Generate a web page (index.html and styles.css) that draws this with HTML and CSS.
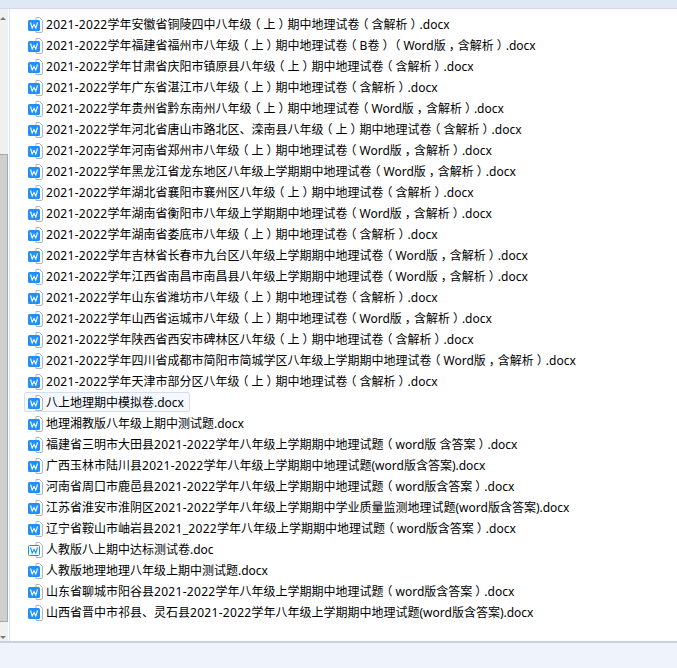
FILE: index.html
```html
<!DOCTYPE html>
<html lang="zh">
<head>
<meta charset="utf-8">
<title>文件列表</title>
<link rel="stylesheet" href="styles.css">
</head>
<body>
<svg class="defs" width="0" height="0" aria-hidden="true">
  <symbol id="docx" viewBox="0 0 15 16">
    <path d="M8 .5h3.500L14.500 3.500V14a1.500 1.500 0 0 1-1.500 1.500H8z" fill="#fff" stroke="#aeb4c0"/>
    <rect x="0" y="3" width="12" height="11" rx="1.500" fill="#1e8ffb"/>
    <path d="M2.500 5.500L4.200 11L6 7.500L7.800 11L9.500 5.500" fill="none" stroke="#fff" stroke-width="1.100"/>
  </symbol>
  <symbol id="doc" viewBox="0 0 15 16">
    <path d="M8 .5h3.500L14.500 3.500V14a1.500 1.500 0 0 1-1.500 1.500H8z" fill="#fff" stroke="#aeb4c0"/>
    <rect x=".5" y="3.500" width="11" height="10" rx="1" fill="#f7fbff" stroke="#1e8ffb"/>
    <path d="M2.500 5.500L4.200 11L6 7.500L7.800 11L9.500 5.500" fill="none" stroke="#1e8ffb" stroke-width="1.100"/>
  </symbol>
</svg>
<div class="topband"></div>
<div class="window">
  <div class="scrollbar">
    <div class="arrow arrow-up"></div>
    <div class="track"><div class="thumb"></div></div>
    <div class="arrow arrow-down"></div>
  </div>
  <ul class="files">
    <li class="file"><svg class="icon"><use href="#docx"/></svg><span><span class="y">2021-2022</span>学年安徽省铜陵四中八年级<span class="p">（</span>上<span class="p">）</span>期中地理试卷<span class="p">（</span>含解析<span class="p">）</span>.docx</span></li>
    <li class="file"><svg class="icon"><use href="#docx"/></svg><span><span class="y">2021-2022</span>学年福建省福州市八年级<span class="p">（</span>上<span class="p">）</span>期中地理试卷<span class="p">（</span>B卷<span class="p">）</span><span class="p">（</span>Word版<span class="p">，</span>含解析<span class="p">）</span>.docx</span></li>
    <li class="file"><svg class="icon"><use href="#docx"/></svg><span><span class="y">2021-2022</span>学年甘肃省庆阳市镇原县八年级<span class="p">（</span>上<span class="p">）</span>期中地理试卷<span class="p">（</span>含解析<span class="p">）</span>.docx</span></li>
    <li class="file"><svg class="icon"><use href="#docx"/></svg><span><span class="y">2021-2022</span>学年广东省湛江市八年级<span class="p">（</span>上<span class="p">）</span>期中地理试卷<span class="p">（</span>含解析<span class="p">）</span>.docx</span></li>
    <li class="file"><svg class="icon"><use href="#docx"/></svg><span><span class="y">2021-2022</span>学年贵州省黔东南州八年级<span class="p">（</span>上<span class="p">）</span>期中地理试卷<span class="p">（</span>Word版<span class="p">，</span>含解析<span class="p">）</span>.docx</span></li>
    <li class="file"><svg class="icon"><use href="#docx"/></svg><span><span class="y">2021-2022</span>学年河北省唐山市路北区、滦南县八年级<span class="p">（</span>上<span class="p">）</span>期中地理试卷<span class="p">（</span>含解析<span class="p">）</span>.docx</span></li>
    <li class="file"><svg class="icon"><use href="#docx"/></svg><span><span class="y">2021-2022</span>学年河南省郑州市八年级<span class="p">（</span>上<span class="p">）</span>期中地理试卷<span class="p">（</span>Word版<span class="p">，</span>含解析<span class="p">）</span>.docx</span></li>
    <li class="file"><svg class="icon"><use href="#docx"/></svg><span><span class="y">2021-2022</span>学年黑龙江省龙东地区八年级上学期期中地理试卷<span class="p">（</span>Word版<span class="p">，</span>含解析<span class="p">）</span>.docx</span></li>
    <li class="file"><svg class="icon"><use href="#docx"/></svg><span><span class="y">2021-2022</span>学年湖北省襄阳市襄州区八年级<span class="p">（</span>上<span class="p">）</span>期中地理试卷<span class="p">（</span>含解析<span class="p">）</span>.docx</span></li>
    <li class="file"><svg class="icon"><use href="#docx"/></svg><span><span class="y">2021-2022</span>学年湖南省衡阳市八年级上学期期中地理试卷<span class="p">（</span>Word版<span class="p">，</span>含解析<span class="p">）</span>.docx</span></li>
    <li class="file"><svg class="icon"><use href="#docx"/></svg><span><span class="y">2021-2022</span>学年湖南省娄底市八年级<span class="p">（</span>上<span class="p">）</span>期中地理试卷<span class="p">（</span>含解析<span class="p">）</span>.docx</span></li>
    <li class="file"><svg class="icon"><use href="#docx"/></svg><span><span class="y">2021-2022</span>学年吉林省长春市九台区八年级上学期期中地理试卷<span class="p">（</span>Word版<span class="p">，</span>含解析<span class="p">）</span>.docx</span></li>
    <li class="file"><svg class="icon"><use href="#docx"/></svg><span><span class="y">2021-2022</span>学年江西省南昌市南昌县八年级上学期期中地理试卷<span class="p">（</span>Word版<span class="p">，</span>含解析<span class="p">）</span>.docx</span></li>
    <li class="file"><svg class="icon"><use href="#docx"/></svg><span><span class="y">2021-2022</span>学年山东省潍坊市八年级<span class="p">（</span>上<span class="p">）</span>期中地理试卷<span class="p">（</span>含解析<span class="p">）</span>.docx</span></li>
    <li class="file"><svg class="icon"><use href="#docx"/></svg><span><span class="y">2021-2022</span>学年山西省运城市八年级<span class="p">（</span>上<span class="p">）</span>期中地理试卷<span class="p">（</span>Word版<span class="p">，</span>含解析<span class="p">）</span>.docx</span></li>
    <li class="file"><svg class="icon"><use href="#docx"/></svg><span><span class="y">2021-2022</span>学年陕西省西安市碑林区八年级<span class="p">（</span>上<span class="p">）</span>期中地理试卷<span class="p">（</span>含解析<span class="p">）</span>.docx</span></li>
    <li class="file"><svg class="icon"><use href="#docx"/></svg><span><span class="y">2021-2022</span>学年四川省成都市简阳市简城学区八年级上学期期中地理试卷<span class="p">（</span>Word版<span class="p">，</span>含解析<span class="p">）</span>.docx</span></li>
    <li class="file"><svg class="icon"><use href="#docx"/></svg><span><span class="y">2021-2022</span>学年天津市部分区八年级<span class="p">（</span>上<span class="p">）</span>期中地理试卷<span class="p">（</span>含解析<span class="p">）</span>.docx</span></li>
    <li class="file file-selected"><svg class="icon"><use href="#docx"/></svg><span>八上地理期中模拟卷.docx</span></li>
    <li class="file"><svg class="icon"><use href="#docx"/></svg><span>地理湘教版八年级上期中测试题.docx</span></li>
    <li class="file"><svg class="icon"><use href="#docx"/></svg><span>福建省三明市大田县<span class="y">2021-2022</span>学年八年级上学期期中地理试题<span class="p">（</span>word版 含答案<span class="p">）</span>.docx</span></li>
    <li class="file"><svg class="icon"><use href="#docx"/></svg><span>广西玉林市陆川县<span class="y">2021-2022</span>学年八年级上学期期中地理试题(word版含答案).docx</span></li>
    <li class="file"><svg class="icon"><use href="#docx"/></svg><span>河南省周口市鹿邑县<span class="y">2021-2022</span>学年八年级上学期期中地理试题<span class="p">（</span>word版含答案<span class="p">）</span>.docx</span></li>
    <li class="file"><svg class="icon"><use href="#docx"/></svg><span>江苏省淮安市淮阴区<span class="y">2021-2022</span>学年八年级上学期期中学业质量监测地理试题(word版含答案).docx</span></li>
    <li class="file"><svg class="icon"><use href="#docx"/></svg><span>辽宁省鞍山市岫岩县<span class="y">2021_2022</span>学年八年级上学期期中地理试题<span class="p">（</span>word版含答案<span class="p">）</span>.docx</span></li>
    <li class="file"><svg class="icon"><use href="#doc"/></svg><span>人教版八上期中达标测试卷.doc</span></li>
    <li class="file"><svg class="icon"><use href="#docx"/></svg><span>人教版地理地理八年级上期中测试题.docx</span></li>
    <li class="file"><svg class="icon"><use href="#docx"/></svg><span>山东省聊城市阳谷县<span class="y">2021-2022</span>学年八年级上学期期中地理试题<span class="p">（</span>word版含答案<span class="p">）</span>.docx</span></li>
    <li class="file"><svg class="icon"><use href="#docx"/></svg><span>山西省晋中市祁县、灵石县<span class="y">2021-2022</span>学年八年级上学期期中地理试题(word版含答案).docx</span></li>
  </ul>
</div>
</body>
</html>
```
FILE: styles.css
```css
* { box-sizing: border-box; }
html, body { margin: 0; padding: 0; }
body {
  width: 677px;
  height: 668px;
  background: #eff3fb;
  font-family: "Noto Sans", "Noto Sans CJK SC", sans-serif;
  font-size: 12px;
  color: #000;
  overflow: hidden;
}
.defs { position: absolute; }
.topband { height: 9px; background: #dfe8f5; border-bottom: 1px solid #cfd9e8; }
.window {
  display: flex;
  height: 634px;
  background: #fff;
  border-bottom: 2px solid #c6d2e3;
}
.scrollbar {
  width: 9px;
  flex: none;
  display: flex;
  flex-direction: column;
  background: #f0f0f0;
  border-right: 1px solid #fff;
}
.arrow { height: 9px; flex: none; position: relative; }
.arrow::after {
  content: "";
  position: absolute;
  left: 0;
  border-left: 3px solid transparent;
  border-right: 3px solid transparent;
}
.arrow-up::after { top: 8px; border-bottom: 3px solid #777; }
.arrow-down::after { bottom: 2px; border-top: 3px solid #777; }
.track { flex: 1; display: flex; flex-direction: column; padding-top: 136px; }
.thumb { flex: 1; background: #cfcfcf; border: 1px solid #a8a8a8; border-left: 0; margin-bottom: 10px; }
.files {
  list-style: none;
  margin: 0;
  padding: 5px 0 0 14px;
  flex: 1;
  border-left: 1px solid #d9e6f4;
}
.file {
  display: flex;
  align-items: center;
  gap: 3px;
  height: 21px;
  padding-left: 4px;
  white-space: nowrap;
  line-height: 21px;
}
.file-selected {
  width: 166px;
  height: 20px;
  margin: 0 0 1px;
  padding: 1px 0 0 3px;
  background: #f5f9fe;
  border: 1px solid #cfe0f5;
  border-radius: 2px;
}
.icon { width: 15px; height: 16px; flex: none; }
.y { letter-spacing: 0.3px; }
.p { font-feature-settings: "halt"; padding: 0 3px; }
```
